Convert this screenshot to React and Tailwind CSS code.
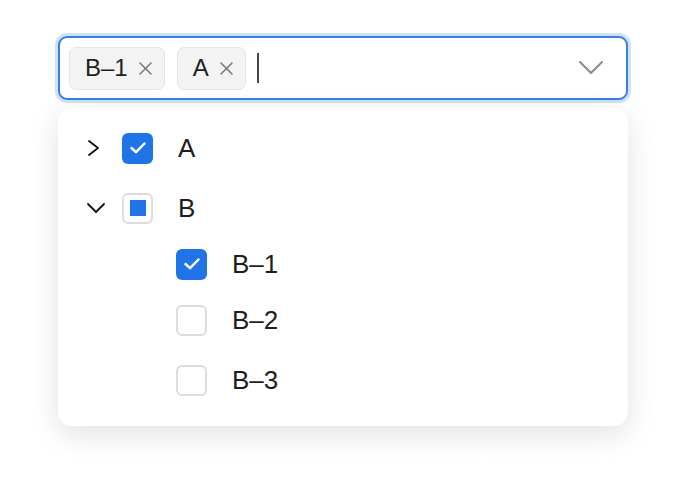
import React from "react";

const font = { fontFamily: "'Liberation Sans', Arial, 'Noto Sans CJK SC', sans-serif" };

function Check() {
  return (
    <div className="w-[31px] h-[31px] rounded-[6px] bg-[#1f75e8] flex items-center justify-center">
      <svg width="18" height="18" viewBox="0 0 18 18" fill="none">
        <path d="M2.5 9 L7 13.2 L15.5 4.5" stroke="white" strokeWidth="2.5" strokeLinecap="round" strokeLinejoin="round" />
      </svg>
    </div>
  );
}

function Empty() {
  return <div className="w-[31px] h-[31px] rounded-[6px] border-2 border-[#dcdcdc] bg-white" />;
}

function Indeterminate() {
  return (
    <div className="w-[31px] h-[31px] rounded-[6px] border-2 border-[#dcdcdc] bg-white flex items-center justify-center">
      <div className="w-[16px] h-[16px] bg-[#1f75e8]" />
    </div>
  );
}

function Tag({ label }) {
  return (
    <div className="h-[43px] flex items-center gap-[11px] pl-[15px] pr-[12px] rounded-[7px] bg-[#f3f3f3] border border-[#e6e6e6]">
      <span className="text-[24px] text-[#1f1f1f] leading-none">{label}</span>
      <svg width="13" height="13" viewBox="0 0 13 13" fill="none">
        <path d="M1 1 L12 12 M12 1 L1 12" stroke="#777" strokeWidth="1.5" strokeLinecap="round" />
      </svg>
    </div>
  );
}

function Row({ indent, arrow, box, label, h }) {
  return (
    <div className={"flex items-center " + h}>
      <div className={indent ? "w-[118px]" : "w-[64px] flex items-center pl-[28px]"}>
        {arrow === "right" && (
          <svg width="16" height="18" viewBox="0 0 16 18" fill="none">
            <path d="M3 2 L12 9 L3 16" stroke="#111" strokeWidth="1.8" strokeLinecap="round" strokeLinejoin="round" />
          </svg>
        )}
        {arrow === "down" && (
          <svg width="20" height="14" viewBox="0 0 20 14" fill="none">
            <path d="M2 3 L10 11 L18 3" stroke="#111" strokeWidth="1.8" strokeLinecap="round" strokeLinejoin="round" />
          </svg>
        )}
      </div>
      {box}
      <span className="ml-[25px] text-[26px] text-[#1e1e1e] leading-none">{label}</span>
    </div>
  );
}

export default function App() {
  return (
    <div className="relative w-[684px] h-[480px] bg-white overflow-hidden" style={font}>
      <div className="pt-[36px] pl-[58px]">
        <div className="w-[570px] h-[64px] rounded-[9px] border-2 border-[#3a7fd8] shadow-[0_0_0_3px_rgba(120,170,240,0.35)] bg-white flex items-center pl-[9px] pr-[22px]">
          <div className="flex items-center gap-[12px]">
            <Tag label="B–1" />
            <Tag label="A" />
          </div>
          <div className="ml-[11px] w-[2px] h-[30px] bg-[#444]" />
          <div className="flex-1" />
          <svg width="26" height="16" viewBox="0 0 26 16" fill="none">
            <path d="M2 2 L13 13 L24 2" stroke="#8a8a8a" strokeWidth="2" strokeLinecap="round" strokeLinejoin="round" />
          </svg>
        </div>
        <div className="mt-[8px] w-[570px] h-[318px] rounded-[14px] bg-white shadow-[0_8px_30px_rgba(0,0,0,0.12)] pt-[10px]">
          <Row h="h-[60px]" arrow="right" box={<Check />} label="A" />
          <Row h="h-[60px]" arrow="down" box={<Indeterminate />} label="B" />
          <Row h="h-[52px]" indent box={<Check />} label="B–1" />
          <Row h="h-[60px]" indent box={<Empty />} label="B–2" />
          <Row h="h-[60px]" indent box={<Empty />} label="B–3" />
        </div>
      </div>
      <div className="absolute left-[441px] top-[450px] text-[18px] font-semibold text-white" style={{ fontFamily: "'Noto Sans CJK SC', sans-serif" }}>
        快传号/人人都是产品经理
      </div>
    </div>
  );
}
